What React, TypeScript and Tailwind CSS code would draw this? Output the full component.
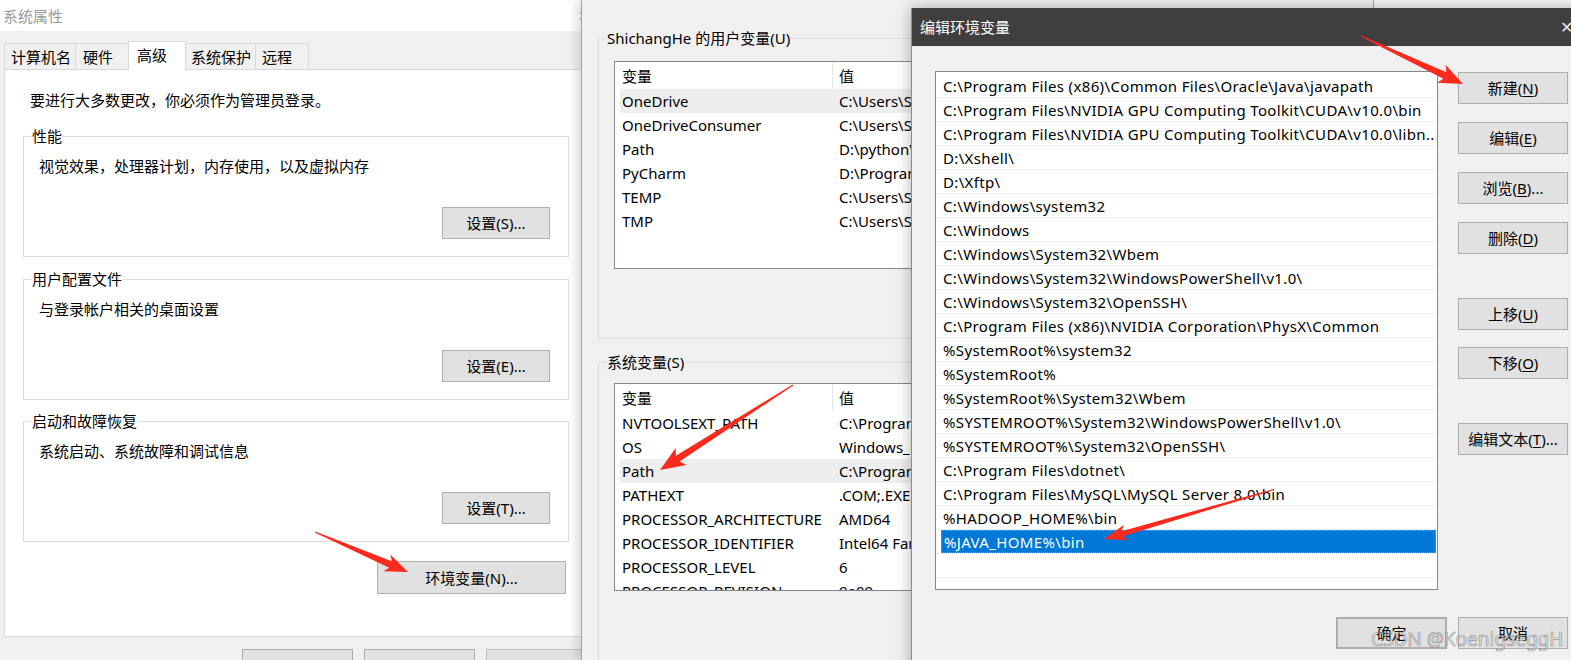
import React from "react";

type BtnProps = { children: React.ReactNode; className?: string };

function Btn({ children, className = "" }: BtnProps) {
  return (
    <div
      className={
        "flex items-center justify-center h-[32px] bg-[#e1e1e1] border border-[#adadad] text-[15px] leading-[20px] text-black whitespace-nowrap " +
        className
      }
    >
      {children}
    </div>
  );
}

function U({ children }: { children: React.ReactNode }) {
  return <span className="underline underline-offset-2">{children}</span>;
}

type GroupProps = { label: string; text: string; btn: string; className?: string };

function Group({ label, text, btn, className = "" }: GroupProps) {
  return (
    <div className={"relative ml-[18px] w-[546px] h-[121px] border border-[#dcdcdc] flex flex-col " + className}>
      <span className="absolute left-[7px] top-[-11px] bg-white px-[1px] leading-[20px]">{label}</span>
      <div className="pl-[15px] pt-[19px] leading-[20px]">{text}</div>
      <Btn className="self-end mr-[18px] mt-[31px] w-[108px]">{btn}</Btn>
    </div>
  );
}

const userVars: [string, string][] = [
  ["OneDrive", "C:\\Users\\ShichangHe\\OneDrive"],
  ["OneDriveConsumer", "C:\\Users\\ShichangHe\\OneDrive"],
  ["Path", "D:\\python\\Scripts\\;D:\\python\\"],
  ["PyCharm", "D:\\Program Files\\JetBrains\\PyCharm\\bin;"],
  ["TEMP", "C:\\Users\\ShichangHe\\AppData\\Local\\Temp"],
  ["TMP", "C:\\Users\\ShichangHe\\AppData\\Local\\Temp"],
];

const sysVars: [string, string][] = [
  ["NVTOOLSEXT_PATH", "C:\\Program Files\\NVIDIA Corporation\\NvToolsExt\\"],
  ["OS", "Windows_NT"],
  ["Path", "C:\\Program Files (x86)\\Common Files\\Oracle\\Java"],
  ["PATHEXT", ".COM;.EXE;.BAT;.CMD;.VBS;.VBE;.JS"],
  ["PROCESSOR_ARCHITECTURE", "AMD64"],
  ["PROCESSOR_IDENTIFIER", "Intel64 Family 6 Model 158"],
  ["PROCESSOR_LEVEL", "6"],
  ["PROCESSOR_REVISION", "9e09"],
];

const paths: string[] = [
  "C:\\Program Files (x86)\\Common Files\\Oracle\\Java\\javapath",
  "C:\\Program Files\\NVIDIA GPU Computing Toolkit\\CUDA\\v10.0\\bin",
  "C:\\Program Files\\NVIDIA GPU Computing Toolkit\\CUDA\\v10.0\\libn...",
  "D:\\Xshell\\",
  "D:\\Xftp\\",
  "C:\\Windows\\system32",
  "C:\\Windows",
  "C:\\Windows\\System32\\Wbem",
  "C:\\Windows\\System32\\WindowsPowerShell\\v1.0\\",
  "C:\\Windows\\System32\\OpenSSH\\",
  "C:\\Program Files (x86)\\NVIDIA Corporation\\PhysX\\Common",
  "%SystemRoot%\\system32",
  "%SystemRoot%",
  "%SystemRoot%\\System32\\Wbem",
  "%SYSTEMROOT%\\System32\\WindowsPowerShell\\v1.0\\",
  "%SYSTEMROOT%\\System32\\OpenSSH\\",
  "C:\\Program Files\\dotnet\\",
  "C:\\Program Files\\MySQL\\MySQL Server 8.0\\bin",
  "%HADOOP_HOME%\\bin",
];

function VarList({ rows, highlight }: { rows: [string, string][]; highlight: number }) {
  return (
    <div className="w-[640px] h-[208px] bg-white border border-[#828790] overflow-hidden flex flex-col">
      <div className="flex h-[27px] shrink-0">
        <div className="w-[217px] pl-[7px] flex items-center">变量</div>
        <div className="w-px bg-[#e5e5e5]" />
        <div className="pl-[6px] flex items-center">值</div>
      </div>
      {rows.map(([k, v], i) => (
        <div
          key={k}
          className={
            "ml-[5px] flex h-[24px] shrink-0 items-center whitespace-nowrap " +
            (i === highlight ? "bg-[#eeeeee]" : "")
          }
        >
          <div className="w-[212px] pl-[2px]">{k}</div>
          <div className="pl-[7px]">{v}</div>
        </div>
      ))}
    </div>
  );
}

function arrowPoints(
  tx: number,
  ty: number,
  px: number,
  py: number,
  headLen: number,
  headHalf: number,
  shaftHalf: number
): string {
  const dx = px - tx;
  const dy = py - ty;
  const L = Math.hypot(dx, dy);
  const ux = dx / L;
  const uy = dy / L;
  const nx = -uy;
  const ny = ux;
  const hx = px - ux * headLen;
  const hy = py - uy * headLen;
  const bx = px - ux * (headLen + 4);
  const by = py - uy * (headLen + 4);
  const pts: [number, number][] = [
    [tx + nx * 0.6, ty + ny * 0.6],
    [hx + nx * shaftHalf, hy + ny * shaftHalf],
    [bx + nx * headHalf, by + ny * headHalf],
    [px, py],
    [bx - nx * headHalf, by - ny * headHalf],
    [hx - nx * shaftHalf, hy - ny * shaftHalf],
    [tx - nx * 0.6, ty - ny * 0.6],
  ];
  return pts.map((p) => p[0].toFixed(1) + "," + p[1].toFixed(1)).join(" ");
}

export default function App() {
  return (
    <div className="relative w-[1571px] h-[660px] overflow-hidden bg-[#f7f7f7] text-[15px] leading-[20px] text-black font-['Noto_Sans','Noto_Sans_CJK_SC',sans-serif]">
      {/* 系统属性 window */}
      <div className="absolute left-0 top-0 w-[600px] h-[660px] bg-[#f0f0f0] flex flex-col">
        <div className="h-[31px] shrink-0 bg-white flex items-center justify-between pl-[3px] pr-[10px] text-[#9a9a9a]">
          <span>系统属性</span>
          <span className="text-[14px]">✕</span>
        </div>
        <div className="h-[38px] shrink-0 flex items-end pl-[4px]">
          <div className="w-[72px] h-[26px] pl-[6px] pt-[3px] border border-b-0 border-[#d9d9d9] bg-[#f0f0f0]">计算机名</div>
          <div className="-ml-px w-[54px] h-[26px] pl-[7px] pt-[3px] border border-b-0 border-[#d9d9d9] bg-[#f0f0f0]">硬件</div>
          <div className="relative z-10 -ml-px -mb-px w-[58px] h-[29px] pl-[8px] pt-[3px] border border-b-0 border-[#d9d9d9] bg-white">高级</div>
          <div className="-ml-px w-[71px] h-[26px] pl-[5px] pt-[3px] border border-b-0 border-[#d9d9d9] bg-[#f0f0f0]">系统保护</div>
          <div className="-ml-px w-[54px] h-[26px] pl-[6px] pt-[3px] border border-b-0 border-[#d9d9d9] bg-[#f0f0f0]">远程</div>
        </div>
        <div className="ml-[4px] w-[583px] h-[568px] shrink-0 bg-white border border-[#d9d9d9] flex flex-col">
          <div className="pl-[25px] pt-[20px] leading-[20px]">要进行大多数更改，你必须作为管理员登录。</div>
          <Group className="mt-[26px]" label="性能" text="视觉效果，处理器计划，内存使用，以及虚拟内存" btn="设置(S)..." />
          <Group className="mt-[22px]" label="用户配置文件" text="与登录帐户相关的桌面设置" btn="设置(E)..." />
          <Group className="mt-[21px]" label="启动和故障恢复" text="系统启动、系统故障和调试信息" btn="设置(T)..." />
          <Btn className="ml-[372px] mt-[19px] w-[189px] h-[33px]">环境变量(N)...</Btn>
        </div>
        <div className="mt-[12px] ml-[242px] flex gap-[11px]">
          <Btn className="w-[111px] h-[44px] pt-[12px]">确定</Btn>
          <Btn className="w-[111px] h-[44px] pt-[12px]">取消</Btn>
          <Btn className="w-[111px] h-[44px] pt-[10px] bg-[#cccccc] border-[#bfbfbf] text-[#838383]">应用(A)</Btn>
        </div>
      </div>

      {/* 环境变量 window */}
      <div className="absolute left-[581px] top-0 w-[793px] h-[660px] bg-[#f0f0f0] border-l border-r border-[#a3a3a3] shadow-[-5px_0_9px_rgba(0,0,0,0.13)] flex flex-col">
        <div className="relative ml-[16px] mt-[38px] w-[720px] h-[301px] shrink-0 border border-[#dcdcdc]">
          <span className="absolute left-[7px] top-[-11px] bg-[#f0f0f0] px-[1px] leading-[20px]">ShichangHe 的用户变量(U)</span>
          <div className="ml-[15px] mt-[22px]">
            <VarList rows={userVars} highlight={0} />
          </div>
        </div>
        <div className="relative ml-[16px] mt-[23px] w-[720px] h-[320px] shrink-0 border border-[#dcdcdc]">
          <span className="absolute left-[7px] top-[-11px] bg-[#f0f0f0] px-[1px] leading-[20px]">系统变量(S)</span>
          <div className="ml-[15px] mt-[20px]">
            <VarList rows={sysVars} highlight={2} />
          </div>
        </div>
      </div>

      {/* 编辑环境变量 window */}
      <div className="absolute left-[911px] top-[8px] w-[680px] h-[680px] bg-[#f0f0f0] border-l border-[#8c8c8c] shadow-[0_0_14px_rgba(0,0,0,0.3)] flex flex-col">
        <div className="h-[38px] shrink-0 bg-[#3f3f3f] flex items-center justify-between pl-[8px] pr-[18px] text-white">
          <span>编辑环境变量</span>
          <span className="text-[16px] text-[#e8e8e8]">✕</span>
        </div>
        <div className="flex shrink-0">
          <div className="ml-[23px] mt-[25px] w-[503px] h-[519px] bg-white border border-[#828790] pt-[2px] flex flex-col overflow-hidden tracking-[0.35px]">
            {paths.map((p) => (
              <div
                key={p}
                className="h-[24px] shrink-0 mx-px pl-[6px] flex items-center border-b border-[#ececec] whitespace-nowrap overflow-hidden"
              >
                {p}
              </div>
            ))}
            <div className="h-[24px] shrink-0 mx-px flex items-stretch border-b border-[#ececec]">
              <div className="ml-[4px] flex-1 pl-[2px] flex items-center bg-[#0078d7] text-white border border-dotted border-[#d88a3a]">
                %JAVA_HOME%\bin
              </div>
            </div>
            <div className="h-[24px] shrink-0 mx-px border-b border-[#ececec]" />
          </div>
          <div className="ml-[20px] mt-[26px] w-[110px] flex flex-col">
            <Btn className="w-[110px]">
              新建(<U>N</U>)
            </Btn>
            <Btn className="w-[110px] mt-[18px]">
              编辑(<U>E</U>)
            </Btn>
            <Btn className="w-[110px] mt-[18px]">
              浏览(<U>B</U>)...
            </Btn>
            <Btn className="w-[110px] mt-[18px]">
              删除(<U>D</U>)
            </Btn>
            <Btn className="w-[110px] mt-[44px]">
              上移(<U>U</U>)
            </Btn>
            <Btn className="w-[110px] mt-[17px]">
              下移(<U>O</U>)
            </Btn>
            <Btn className="w-[110px] mt-[44px]">
              编辑文本(<U>T</U>)...
            </Btn>
          </div>
        </div>
        <div className="mt-[27px] ml-[424px] flex gap-[11px]">
          <Btn className="w-[111px] border-2 border-[#0078d7]">确定</Btn>
          <Btn className="w-[110px]">取消</Btn>
        </div>
      </div>

      {/* watermark */}
      <div className="absolute left-[1371px] top-[627px] text-[19px] leading-[24px] whitespace-nowrap text-[rgba(255,255,255,0.45)] [-webkit-text-stroke:0.7px_rgba(100,100,100,0.65)] font-['Noto_Sans',sans-serif]">
        CSDN @KoenigseggH
      </div>

      {/* red arrows */}
      <svg className="absolute left-0 top-0 pointer-events-none" width="1571" height="660" viewBox="0 0 1571 660">
        <polygon points={arrowPoints(315, 532, 408, 572, 19, 9, 3.5)} fill="#fb2a1e" />
        <polygon points={arrowPoints(793, 385, 660, 470, 21, 10, 3.5)} fill="#fb2a1e" />
        <polygon points={arrowPoints(1361, 36, 1463, 84, 20, 10, 3.5)} fill="#fb2a1e" />
        <polygon points={arrowPoints(1272, 490, 1104, 539, 19, 8, 2.6)} fill="#fb2a1e" />
      </svg>
    </div>
  );
}
